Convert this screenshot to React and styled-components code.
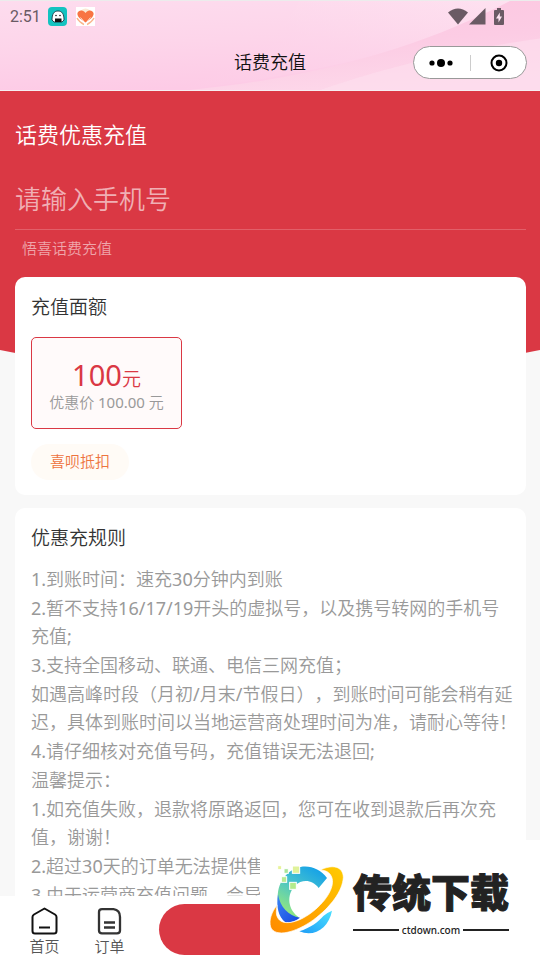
import React, { useState } from "react";
import styled, { createGlobalStyle } from "styled-components";

const rules = [
  "1.到账时间：速充30分钟内到账",
  "2.暂不支持16/17/19开头的虚拟号，以及携号转网的手机号\n充值;",
  "3.支持全国移动、联通、电信三网充值；",
  "如遇高峰时段（月初/月末/节假日），到账时间可能会稍有延\n迟，具体到账时间以当地运营商处理时间为准，请耐心等待！",
  "4.请仔细核对充值号码，充值错误无法退回;",
  "温馨提示：",
  "1.如充值失败，退款将原路返回，您可在收到退款后再次充\n值，谢谢！",
  "2.超过30天的订单无法提供售",
  "3.由于运营商充值问题，会导",
];

const amounts = [{ value: 100, price: "100.00" }];

function HeaderWaves() {
  return (
    <Waves viewBox="0 0 540 90" preserveAspectRatio="none" aria-hidden="true">
      <defs>
        <linearGradient id="sky" x1="0" y1="0" x2="0.25" y2="1">
          <stop offset="0" stopColor="#fddcee" />
          <stop offset="0.5" stopColor="#fdd5ea" />
          <stop offset="1" stopColor="#fdcbe6" />
        </linearGradient>
        <linearGradient id="beam" x1="0" y1="1" x2="1" y2="0">
          <stop offset="0" stopColor="#fdcbe6" />
          <stop offset="0.5" stopColor="#fdd6eb" />
          <stop offset="1" stopColor="#fee6f2" />
        </linearGradient>
        <linearGradient id="fold" x1="0.3" y1="0" x2="0.6" y2="1">
          <stop offset="0" stopColor="#fcc8e1" />
          <stop offset="0.5" stopColor="#fccce4" />
          <stop offset="1" stopColor="#fdd8ea" />
        </linearGradient>
      </defs>
      <rect width="540" height="90" fill="url(#sky)" />
      <path d="M180 90C230 66 275 42 300 0H510C450 34 360 70 180 90Z" fill="url(#beam)" opacity="0.6" />
      <path d="M190 90C330 76 430 42 510 0H540V90H190Z" fill="url(#fold)" />
      <path d="M320 90C400 62 480 46 540 38V90Z" fill="#fde0ee" opacity="0.6" />
    </Waves>
  );
}

function App() {
  const [phone, setPhone] = useState("");
  const [selected, setSelected] = useState(100);

  return (
    <Screen>
      <GlobalStyle />
      <Header>
        <HeaderWaves />
        <StatusBar>
          <Time>2:51</Time>
          <svg width="19" height="19" viewBox="0 0 19 19" aria-hidden="true">
            <rect width="19" height="19" rx="4" fill="#14c3c0" />
            <path d="M4 13C4 7 6 4 10 4s6 3 6 9l-2 2H6Z" fill="#fff" stroke="#123" strokeWidth="0.8" />
            <path d="M7 11.500h6.500V15H7Z" fill="#111" />
            <circle cx="8" cy="8.500" r="0.8" fill="#111" />
            <circle cx="12" cy="8.500" r="0.8" fill="#111" />
          </svg>
          <HeartIcon width="19" height="19" viewBox="0 0 19 19" aria-hidden="true">
            <rect width="19" height="19" fill="#fff" />
            <circle cx="9.500" cy="7.500" r="6" fill="#fbe9d4" />
            <path d="M9.500 15.500L4 11.500C-1 7 2 3 6 3.500Q8.500 4 9.500 6Q10.500 4 13 3.500C17 3 20 7 15 11.500Z" fill="#f87443" />
            <path d="M1 11Q3 15 8 17.500M18 11Q16 15 11 17.500" fill="none" stroke="#f9b48c" strokeWidth="1.400" />
            <path d="M4.500 10.500l3 3.500 1 3M14.500 10.500l-3 3.500-1 3" fill="none" stroke="#fff" strokeWidth="0.7" />
          </HeartIcon>
          <Signals>
            <svg width="20" height="17" viewBox="0 0 20 17">
              <path d="M0 4.500Q10-3.500 20 4.500L10 16.500Z" fill="#6a5a64" />
            </svg>
            <svg width="17" height="17" viewBox="0 0 17 17">
              <path d="M16.500 0V16.500H0Z" fill="#6a5a64" />
            </svg>
            <BatteryIcon width="10" height="17" viewBox="0 0 10 17">
              <path d="M3 0H7V2H9Q10 2 10 3V16Q10 17 9 17H1Q0 17 0 16V3Q0 2 1 2H3Z" fill="#6a5a64" />
              <path d="M5.800 4.500L2 10.500H4.500V14.500L8 8.500H5.800Z" fill="#fde4f1" />
            </BatteryIcon>
          </Signals>
        </StatusBar>
        <TitleBar>
          <PageTitle>话费充值</PageTitle>
          <Capsule>
            <CapsuleButton type="button" aria-label="更多">
              <svg width="24" height="10" viewBox="0 0 24 10">
                <circle cx="3" cy="5" r="2.600" />
                <circle cx="12" cy="5" r="4" />
                <circle cx="21" cy="5" r="2.600" />
              </svg>
            </CapsuleButton>
            <Divider />
            <CapsuleButton type="button" aria-label="关闭">
              <svg width="18" height="18" viewBox="0 0 18 18">
                <circle cx="9" cy="9" r="7.500" fill="none" stroke="#000" strokeWidth="2" />
                <circle cx="9" cy="9" r="3.200" />
              </svg>
            </CapsuleButton>
          </Capsule>
        </TitleBar>
      </Header>

      <Main>
        <Hero>
          <HeroTitle>话费优惠充值</HeroTitle>
          <PhoneInput
            type="tel"
            aria-label="手机号"
            placeholder="请输入手机号"
            value={phone}
            onChange={(e) => setPhone(e.target.value)}
          />
          <Hint>悟喜话费充值</Hint>
        </Hero>

        <Cards>
          <Card>
            <CardTitle>充值面额</CardTitle>
            <AmountGrid>
              {amounts.map((item) => (
                <Amount
                  key={item.value}
                  type="button"
                  $active={selected === item.value}
                  onClick={() => setSelected(item.value)}
                >
                  <Value>
                    {item.value}
                    <small>元</small>
                  </Value>
                  <Price>优惠价 {item.price} 元</Price>
                </Amount>
              ))}
            </AmountGrid>
            <Deduct>喜呗抵扣</Deduct>
          </Card>

          <Card $grow>
            <CardTitle>优惠充规则</CardTitle>
            <Rules>
              {rules.map((rule) => (
                <p key={rule}>{rule}</p>
              ))}
            </Rules>
          </Card>
        </Cards>
      </Main>

      <BottomBar>
        <NavLink href="#home">
          <svg width="27" height="28" viewBox="0 0 27 28" fill="none" stroke="#111" strokeWidth="2">
            <path d="M13.500 1.500L24 7.500Q25.500 8.500 25.500 10V24Q25.500 26.500 23 26.500H4Q1.500 26.500 1.500 24V10Q1.500 8.500 3 7.500Z" strokeLinejoin="round" />
            <path d="M8 20.500H19" />
          </svg>
          首页
        </NavLink>
        <NavLink href="#orders">
          <svg width="27" height="28" viewBox="0 0 27 28" fill="none" stroke="#333" strokeWidth="2.300">
            <path d="M6 2.200H17.500Q24 3 24 10V23.500Q24 26.300 21 26.300H6Q3 26.300 3 23.500V5Q3 2.200 6 2.200Z" />
            <path d="M8 15.500H19M8 20.500H19" />
          </svg>
          订单
        </NavLink>
        <PayButton type="button" aria-label="充值" />
      </BottomBar>

      <Watermark>
        <svg width="76" height="72" viewBox="27 27 228 216" aria-hidden="true">
          <defs>
            <linearGradient id="ring" x1="0.900" y1="0" x2="0.300" y2="1">
              <stop offset="0" stopColor="#0d9cec" />
              <stop offset="0.450" stopColor="#41bfd0" />
              <stop offset="1" stopColor="#93e87e" />
            </linearGradient>
            <linearGradient id="deep" x1="0" y1="0" x2="1" y2="1">
              <stop offset="0" stopColor="#3b86f4" />
              <stop offset="1" stopColor="#1646e0" />
            </linearGradient>
            <linearGradient id="orbit" x1="1" y1="0" x2="0" y2="1">
              <stop offset="0" stopColor="#ffcb00" />
              <stop offset="1" stopColor="#ff8a00" />
            </linearGradient>
            <linearGradient id="tail" x1="0" y1="1" x2="1" y2="0">
              <stop offset="0" stopColor="#1e9cf6" />
              <stop offset="1" stopColor="#4be0ff" />
            </linearGradient>
          </defs>
          <path d="M201 69C178 39 142 27 108 40C64 58 46 105 56 150C63 178 80 193 118 188C83 165 78 120 106 91C126 72 157 73 176 99Z" fill="url(#ring)" />
          <path d="M54 118C48 155 55 185 76 202Q100 203 120 188C85 184 60 155 54 118Z" fill="url(#deep)" />
          <path d="M181 45C218 27 249 34 250 67C248 108 211 157 161 194C107 233 45 249 32 216C26 196 35 171 51 151C48 169 48 180 53 188C66 213 112 206 157 171C205 133 225 91 215 66C209 51 197 46 181 45Z" fill="url(#orbit)" stroke="#fff" strokeWidth="2" />
          <path d="M216 167C206 219 163 248 118 229C151 218 174 202 190 183Q203 172 216 167Z" fill="url(#tail)" />
          <g stroke="#fff" strokeWidth="3">
            <rect x="53" y="32" width="12" height="12" fill="#e7f39a" />
            <rect x="72" y="41" width="13" height="14" fill="#a9e599" />
            <rect x="97" y="33" width="22" height="22" fill="#e0f29a" />
            <rect x="64" y="65" width="16" height="17" fill="#b8ea94" />
            <rect x="89" y="82" width="20" height="21" fill="#b3eb8c" />
          </g>
        </svg>
        <Brand>
          <BrandName>传统下载</BrandName>
          <BrandUrl>ctdown.com</BrandUrl>
        </Brand>
      </Watermark>
    </Screen>
  );
}

export default App;

const GlobalStyle = createGlobalStyle`
  * {
    box-sizing: border-box;
  }
  body {
    margin: 0;
    background: #f8f8f8;
    font-family: "Noto Sans", "Noto Sans CJK SC DemiLight", "Noto Sans CJK SC", sans-serif;
    font-weight: 400;
  }
  button, input {
    font-family: inherit;
    font-weight: inherit;
  }
  h1, h2, p {
    margin: 0;
    font-weight: inherit;
  }
`;

const Screen = styled.div`
  display: flex;
  flex-direction: column;
  height: 100vh;
  overflow: hidden;
`;

const Header = styled.header`
  position: relative;
  flex: none;
  border-top: 1px solid #ececec;
  border-bottom: 1px solid #f6eef2;
`;

const Waves = styled.svg`
  position: absolute;
  inset: 0;
  width: 100%;
  height: 100%;
`;

const StatusBar = styled.div`
  position: relative;
  display: flex;
  align-items: center;
  height: 30px;
  padding: 0 36px 0 10px;
`;

const Time = styled.span`
  width: 38px;
  font-family: Roboto, sans-serif;
  font-size: 16px;
  color: #6a5a64;
`;

const HeartIcon = styled.svg`
  margin-left: 9px;
`;

const Signals = styled.div`
  display: flex;
  gap: 1px;
  margin-left: auto;
`;

const BatteryIcon = styled.svg`
  margin-left: 7px;
`;

const TitleBar = styled.div`
  position: relative;
  display: grid;
  grid-template-columns: 1fr auto 1fr;
  align-items: center;
  height: 59px;
  padding: 4px 13px 0;
`;

const PageTitle = styled.h1`
  grid-column: 2;
  padding-bottom: 2px;
  font-size: 18px;
  line-height: 26px;
  color: #111;
`;

const Capsule = styled.div`
  display: flex;
  align-items: center;
  justify-self: end;
  width: 114px;
  height: 33px;
  border: 1px solid #999;
  border-radius: 17px;
  background: #fff;
`;

const CapsuleButton = styled.button`
  display: flex;
  flex: 1;
  align-items: center;
  justify-content: center;
  height: 100%;
  padding: 0;
  border: 0;
  background: none;
`;

const Divider = styled.span`
  width: 1px;
  height: 16px;
  margin: 0 2px;
  background: #ccc;
`;

const Main = styled.main`
  display: flex;
  flex: 1;
  flex-direction: column;
  min-height: 0;
  overflow-y: auto;
  scrollbar-width: none;
`;

const Hero = styled.section`
  flex: none;
  padding: 27px 14px 117px 15px;
  background: #da3844;
  color: #fff;
  clip-path: ellipse(120% 100% at 50% 0);
`;

const HeroTitle = styled.h2`
  font-size: 22px;
  line-height: 32px;
`;

const PhoneInput = styled.input`
  display: block;
  width: 100%;
  height: 61px;
  margin-top: 19px;
  padding: 0;
  border: 0;
  border-bottom: 1px solid #e25f69;
  border-radius: 0;
  outline: none;
  background: none;
  font-size: 26px;
  color: #fff;

  &::placeholder {
    color: #f0afb4;
    opacity: 1;
  }
`;

const Hint = styled.p`
  margin-top: 7px;
  padding-left: 7px;
  font-size: 15px;
  line-height: 22px;
  color: #efa5ab;
`;

const Cards = styled.div`
  position: relative;
  display: flex;
  flex: 1 0 auto;
  flex-direction: column;
  gap: 13px;
  margin-top: -99px;
  padding: 0 14px 0 15px;
`;

const Card = styled.section`
  flex: ${(props) => (props.$grow ? "1 0 auto" : "none")};
  padding: 16px 16px 15px;
  border-radius: 10px;
  background: #fff;
`;

const CardTitle = styled.h2`
  font-size: 19px;
  line-height: 28px;
  color: #333;
`;

const AmountGrid = styled.div`
  display: grid;
  grid-template-columns: repeat(3, 1fr);
  gap: 13px;
  margin-top: 16px;
`;

const Amount = styled.button`
  display: flex;
  flex-direction: column;
  align-items: center;
  justify-content: center;
  height: 92px;
  padding: 4px 0 0;
  border: 1px solid ${(props) => (props.$active ? "#da3844" : "#ddd")};
  border-radius: 5px;
  background: ${(props) => (props.$active ? "#fffafa" : "#fff")};
`;

const Value = styled.span`
  font-size: 29px;
  line-height: 30px;
  color: #da3844;

  small {
    font-size: 19px;
  }
`;

const Price = styled.span`
  font-size: 15px;
  line-height: 16px;
  color: #999;
  white-space: nowrap;
`;

const Deduct = styled.p`
  width: fit-content;
  margin-top: 15px;
  padding: 0 19px 2px;
  border-radius: 18px;
  background: #fffbf6;
  font-size: 15px;
  line-height: 34px;
  color: #ee7440;
`;

const Rules = styled.div`
  display: flex;
  flex-direction: column;
  gap: 1px;
  margin-top: 13px;
  font-size: 18px;
  line-height: 28px;
  color: #999;
  white-space: pre;
  text-spacing-trim: space-all;
`;

const BottomBar = styled.nav`
  display: flex;
  flex: none;
  align-items: flex-start;
  height: 64px;
  padding: 8px 14px 0 12px;
  background: #fff;
`;

const NavLink = styled.a`
  display: flex;
  flex-direction: column;
  align-items: center;
  width: 65px;
  padding-top: 3px;
  font-size: 15px;
  line-height: 22px;
  color: #555;
  text-decoration: none;
`;

const PayButton = styled.button`
  flex: 1;
  height: 51px;
  margin-left: 17px;
  border: 0;
  border-radius: 26px;
  background: #da3844;
`;

const Watermark = styled.aside`
  position: fixed;
  right: 0;
  bottom: 0;
  display: flex;
  align-items: center;
  gap: 8px;
  width: 280px;
  height: 120px;
  padding-left: 9px;
  background: #fff;
`;

const Brand = styled.div`
  display: flex;
  flex-direction: column;
  width: 156px;
  color: #222;
`;

const BrandName = styled.strong`
  font-family: "Noto Sans CJK SC", sans-serif;
  font-size: 39px;
  font-weight: 900;
  line-height: 56px;
  -webkit-text-stroke: 1px #222;
`;

const BrandUrl = styled.span`
  display: flex;
  align-items: center;
  gap: 3px;
  margin-top: 4px;
  font-family: "Noto Sans", sans-serif;
  font-size: 10px;
  font-weight: 500;
  line-height: 16px;

  &::before,
  &::after {
    content: "";
    flex: 1;
    height: 2px;
    background: #222;
  }
`;
